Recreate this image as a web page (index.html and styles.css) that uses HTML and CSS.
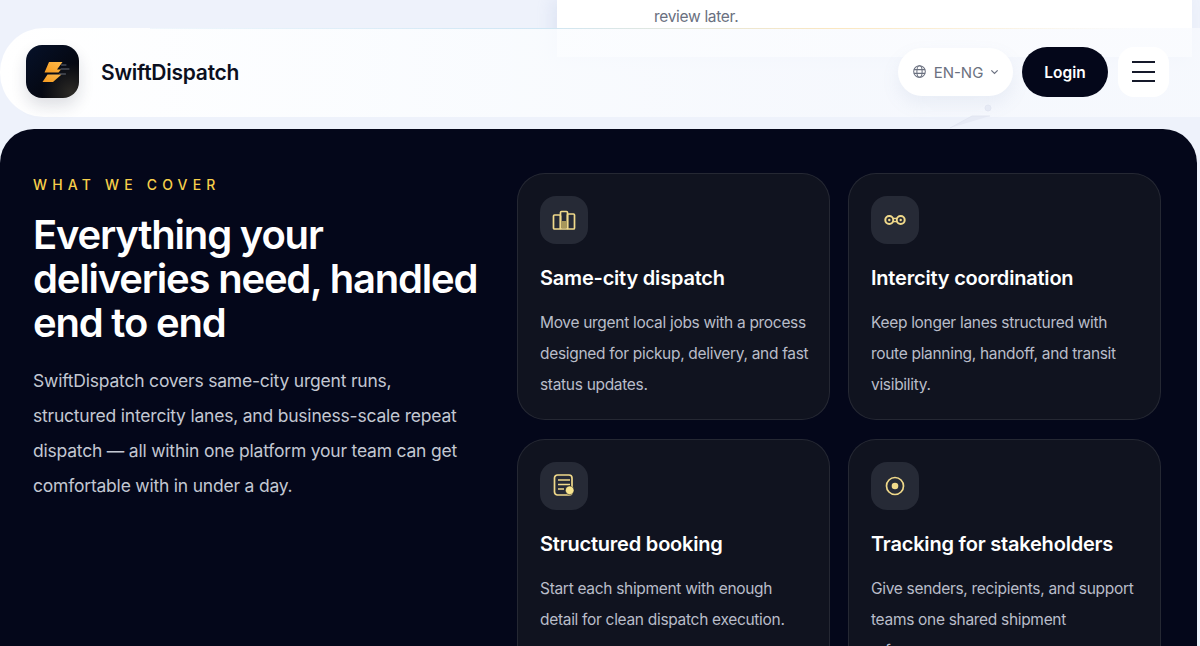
FILE: index.html
```html
<!DOCTYPE html>
<html lang="en">
<head>
<meta charset="UTF-8" />
<meta name="viewport" content="width=device-width, initial-scale=1" />
<title>SwiftDispatch</title>
<link rel="stylesheet" href="styles.css">
</head>
<body>
  <div class="prev-card">
    <p>review later.</p>
  </div>

  <header class="topbar">
    <a class="brand" href="#">
      <span class="brand-mark">
        <svg viewBox="0 0 53 53" aria-hidden="true">
          <defs>
            <linearGradient id="boltFill" x1="0" y1="1" x2="1" y2="0">
              <stop offset="0" stop-color="#f59a1f" />
              <stop offset="1" stop-color="#fdb94a" />
            </linearGradient>
          </defs>
          <path d="M23 17H36.500L31 24.500H35L32.500 27.500H18.500Z" fill="url(#boltFill)" />
          <path d="M21.500 29.500H35.500L27 37H16.500Z" fill="url(#boltFill)" />
          <path d="M35.500 20H40M35 24H43M33.500 29H39.500" stroke="#666c78" stroke-width="1" stroke-linecap="round" />
        </svg>
      </span>
      <span class="brand-name">SwiftDispatch</span>
    </a>
    <div class="topbar-actions">
      <button class="lang">
        <svg class="globe" viewBox="0 0 16 16" aria-hidden="true">
          <circle cx="8" cy="8" r="6.200" />
          <ellipse cx="8" cy="8" rx="2.800" ry="6.200" />
          <path d="M2 6h12M2 10h12" />
        </svg>
        <span class="lang-code">EN-NG</span>
        <svg class="chevron" viewBox="0 0 10 6" aria-hidden="true"><path d="M1.500 1.200 5 4.500l3.500-3.300" /></svg>
      </button>
      <button class="login">Login</button>
      <button class="menu" aria-label="Menu"><span></span><span></span><span></span></button>
    </div>
    <svg class="streak" viewBox="0 0 60 28" aria-hidden="true">
      <path d="M0 27 22 15h18" />
      <circle cx="38" cy="7" r="3" />
    </svg>
  </header>

  <section class="cover">
    <div class="cover-intro">
      <div class="eyebrow">WHAT WE COVER</div>
      <h2>Everything your deliveries need, handled end to end</h2>
      <p>SwiftDispatch covers same-city urgent runs, structured intercity lanes, and business-scale repeat dispatch — all within one platform your team can get comfortable with in under a day.</p>
    </div>
    <div class="cover-grid">
      <article class="card">
        <span class="card-icon">
          <svg viewBox="0 0 24 24" aria-hidden="true">
            <rect x="1.500" y="7" width="7" height="14" rx="1" />
            <rect x="8.500" y="3.500" width="7" height="17.500" rx="1" />
            <rect x="15.500" y="6" width="7" height="15" rx="1" />
            <rect x="9.500" y="13" width="5" height="7" fill="#a8975a" stroke="none" />
          </svg>
        </span>
        <h3>Same-city dispatch</h3>
        <p>Move urgent local jobs with a process designed for pickup, delivery, and fast status updates.</p>
      </article>
      <article class="card">
        <span class="card-icon">
          <svg viewBox="0 0 24 24" class="heavy" aria-hidden="true">
            <circle cx="6.300" cy="12" r="4" />
            <circle cx="17.700" cy="12" r="4" />
            <circle cx="6.300" cy="12" r="1.200" class="solid" />
            <circle cx="17.700" cy="12" r="1.200" class="solid" />
            <path d="M10.300 10.300h3.400M10.300 13.700h3.400" stroke-width="1.200" />
          </svg>
        </span>
        <h3>Intercity coordination</h3>
        <p>Keep longer lanes structured with route planning, handoff, and transit visibility.</p>
      </article>
      <article class="card">
        <span class="card-icon">
          <svg viewBox="0 0 24 24" aria-hidden="true">
            <rect x="2.500" y="1" width="17.500" height="20" rx="3" />
            <path d="M6 6h12M6 10.500h12M6 15h6" />
            <circle cx="17.700" cy="16.300" r="4.300" class="dot" />
          </svg>
        </span>
        <h3>Structured booking</h3>
        <p>Start each shipment with enough detail for clean dispatch execution.</p>
      </article>
      <article class="card">
        <span class="card-icon">
          <svg viewBox="0 0 24 24" aria-hidden="true">
            <circle cx="12" cy="12" r="8.500" />
            <circle cx="12" cy="12" r="3.300" class="solid" />
          </svg>
        </span>
        <h3>Tracking for stakeholders</h3>
        <p>Give senders, recipients, and support teams one shared shipment reference.</p>
      </article>
    </div>
  </section>
</body>
</html>
```

FILE: styles.css
```css
html, body {
  height: 100%;
  margin: 0;
  overflow: hidden;
}
body {
  background: #eef2fb;
  font-family: Inter, "Noto Sans", sans-serif;
  color: #0b0f1e;
}
button {
  font-family: inherit;
  border: none;
  cursor: pointer;
}

/* tail of the section scrolled under the bar */
.prev-card {
  width: 635px;
  height: 57px;
  margin-left: 557px;
  box-sizing: border-box;
  padding-left: 97px;
  background: #fff;
  box-shadow: -6px 0 14px rgba(150, 165, 210, 0.16);
}
.prev-card p {
  margin: 0;
  padding-top: 7px;
  font-size: 15.500px;
  line-height: 20px;
  letter-spacing: -0.02em;
  color: #6a7080;
}

.topbar {
  position: relative;
  height: 89px;
  box-sizing: border-box;
  margin: -29px 0 12px;
  padding: 0 31px 2px 26px;
  display: flex;
  align-items: center;
  justify-content: space-between;
  border-radius: 44px 0 0 44px;
  background: linear-gradient(90deg, #fff 0, rgba(251, 253, 255, 0.9) 35%, rgba(248, 250, 254, 0.78) 70%);
}
.topbar::before {
  content: "";
  position: absolute;
  top: 0;
  left: 150px;
  right: 70px;
  height: 1px;
  background: linear-gradient(90deg, rgba(190, 222, 245, 0.2), #cfe6f4 40%, #fbe7c0 70%, rgba(251, 231, 192, 0));
}
.brand {
  display: flex;
  align-items: center;
  gap: 22px;
  text-decoration: none;
  color: inherit;
}
.brand-mark {
  width: 53px;
  height: 53px;
  border-radius: 16px;
  overflow: hidden;
  background: radial-gradient(circle at 85% 90%, #2c2a26 0, rgba(44, 42, 38, 0) 45%), linear-gradient(135deg, #06112a, #05070f 70%);
  box-shadow: 0 8px 16px rgba(20, 30, 60, 0.14);
}
.brand-mark svg {
  display: block;
  width: 53px;
  height: 53px;
}
.brand-name {
  padding-top: 2px;
  font-size: 21px;
  font-weight: 600;
  letter-spacing: -0.012em;
}
.topbar-actions {
  display: flex;
  align-items: center;
  gap: 9px;
}
.lang {
  width: 115px;
  height: 48px;
  display: flex;
  align-items: center;
  justify-content: center;
  gap: 7px;
  padding: 0;
  border-radius: 24px;
  background: #fff;
  color: #6b7180;
  font-size: 15px;
  box-shadow: 0 8px 18px rgba(120, 135, 180, 0.1);
}
.lang-code {
  padding-top: 1px;
}
.globe, .chevron {
  fill: none;
  stroke: #6b7180;
  stroke-width: 1.100;
}
.globe { width: 15px; height: 15px; }
.chevron { width: 9px; height: 6px; stroke-width: 1.400; }
.login {
  width: 86px;
  height: 50px;
  padding: 1px 0 0;
  border-radius: 25px;
  background: #04071a;
  color: #fff;
  font-size: 15.500px;
  font-weight: 600;
}
.menu {
  width: 51px;
  height: 50px;
  margin-left: 1px;
  display: flex;
  flex-direction: column;
  align-items: center;
  justify-content: center;
  gap: 7.500px;
  padding: 0;
  border-radius: 16px;
  background: #fff;
}
.menu span {
  display: block;
  width: 23px;
  height: 2px;
  background: #15192a;
}
.streak {
  position: absolute;
  right: 190px;
  bottom: -12px;
  width: 60px;
  height: 28px;
  fill: #e6eaf5;
  stroke: #e2e6f2;
}

.cover {
  width: 1197px;
  min-height: 560px;
  box-sizing: border-box;
  padding: 44px 36px 0 33px;
  display: grid;
  grid-template-columns: 1fr 644px;
  column-gap: 28px;
  border-radius: 34px 34px 0 0;
  background: #04071a;
  color: #fff;
}
.eyebrow {
  margin-top: 3px;
  font-size: 14px;
  line-height: 18px;
  font-weight: 500;
  letter-spacing: 0.37em;
  color: #f7cf4a;
}
.cover-intro h2 {
  margin: 19px 0 0;
  font-size: 40px;
  line-height: 44px;
  font-weight: 600;
  letter-spacing: -0.03em;
}
.cover-intro p {
  max-width: 436px;
  margin: 18px 0 0;
  font-size: 17.500px;
  line-height: 35px;
  letter-spacing: -0.012em;
  color: #c3c7d2;
}
.cover-grid {
  display: grid;
  grid-template-columns: 1fr 1fr;
  align-content: start;
  gap: 19px 18px;
}
.card {
  height: 247px;
  box-sizing: border-box;
  padding: 22px 18px 22px 22px;
  border: 1px solid rgba(255, 255, 255, 0.09);
  border-radius: 28px;
  background: #10131f;
}
.card-icon {
  width: 48px;
  height: 48px;
  display: flex;
  align-items: center;
  justify-content: center;
  border-radius: 16px;
  background: #262a36;
}
.card-icon svg {
  width: 24px;
  height: 24px;
  fill: none;
  stroke: #f0d98a;
  stroke-width: 1.700;
}
.card-icon svg.heavy {
  stroke-width: 2;
}
.card-icon .solid {
  fill: #f0d98a;
  stroke: none;
}
.card-icon .dot {
  fill: #f7e48e;
  stroke: #10131f;
  stroke-width: 0.500;
}
.card h3 {
  margin: 21px 0 0;
  font-size: 20px;
  line-height: 26px;
  font-weight: 600;
  letter-spacing: -0.01em;
}
.card p {
  max-width: 270px;
  margin: 16px 0 0;
  font-size: 15.500px;
  line-height: 31px;
  letter-spacing: -0.02em;
  color: #b9bdc9;
}
```
